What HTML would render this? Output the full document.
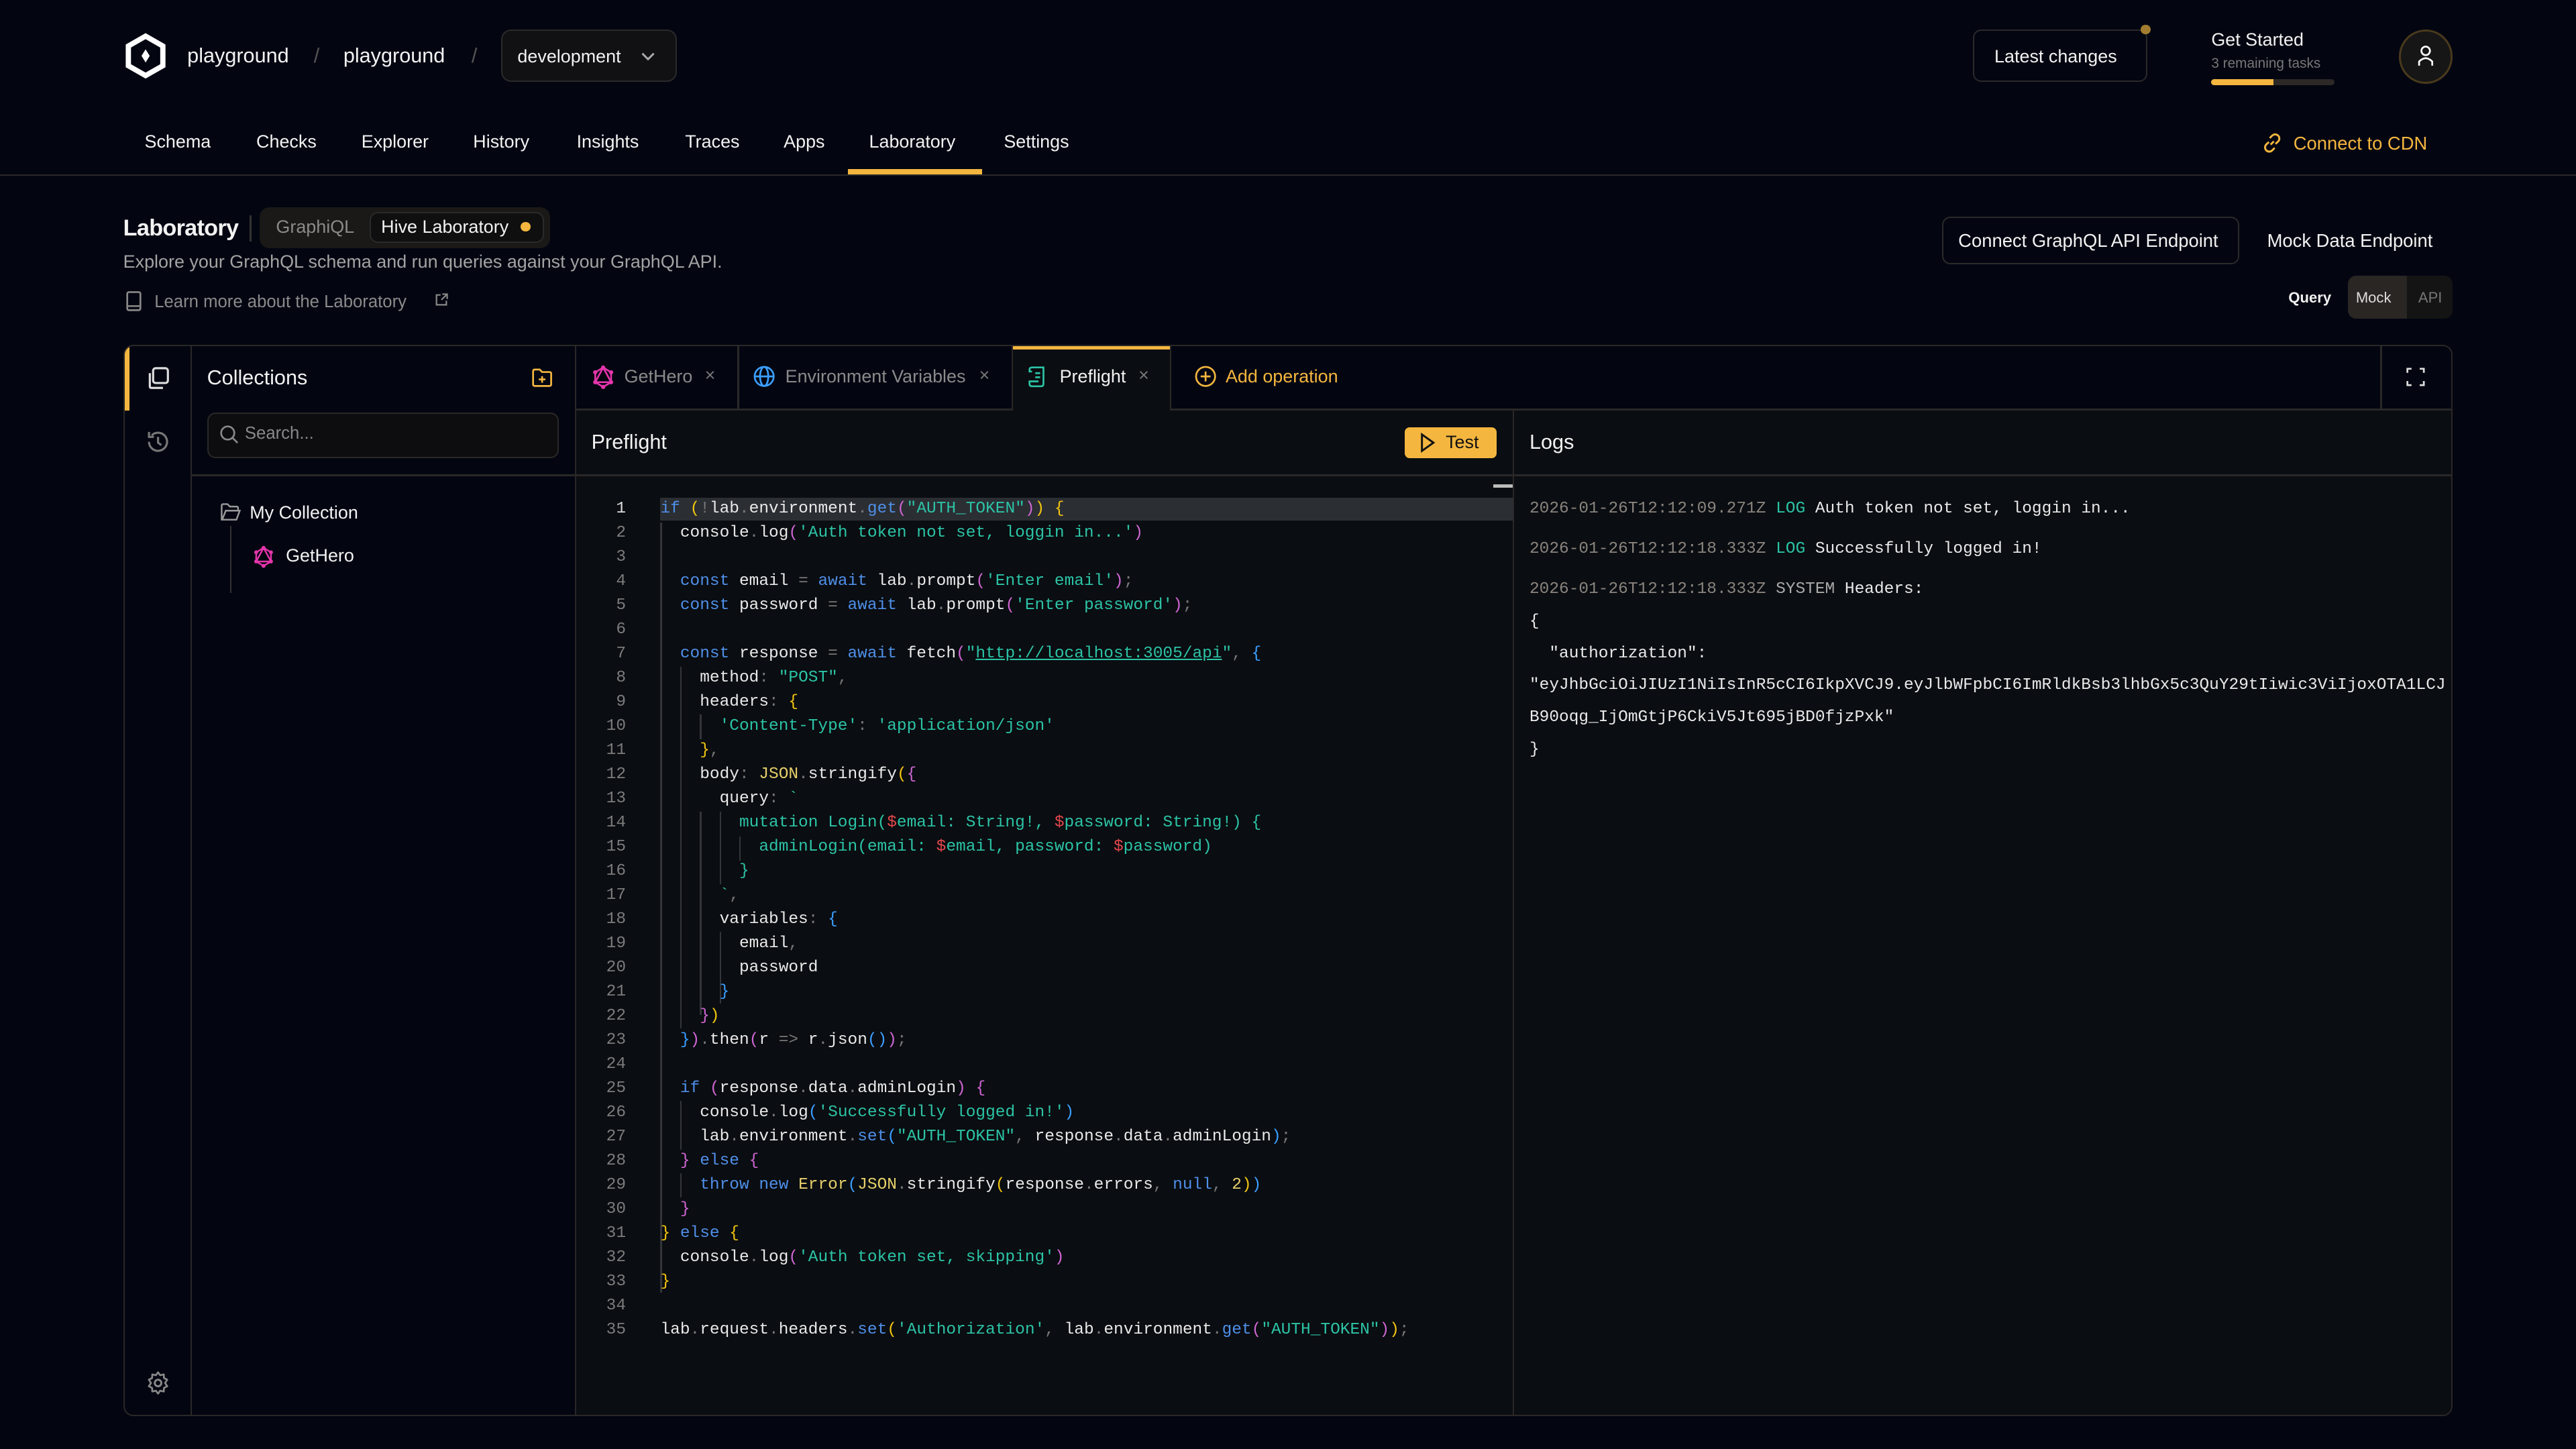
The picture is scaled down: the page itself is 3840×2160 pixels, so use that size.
<!DOCTYPE html>
<html><head><meta charset="utf-8"><style>
*{box-sizing:border-box;margin:0;padding:0}
html,body{width:3840px;height:2160px;overflow:hidden;background:#030611}
#r{zoom:2.44898;width:1568px;height:882px;position:relative;font-family:"Liberation Sans",sans-serif;color:#f2f2f2;background:#030611;overflow:hidden}
.a{position:absolute;white-space:nowrap}
.mono{font-family:"Liberation Mono",monospace}
.k{color:#4f8fe8}.s{color:#2cc3a6}.p{color:#777}.y{color:#f1c40f}.m{color:#cf65d3}.b{color:#3b9eff}.r{color:#e5484d}.t{color:#e6cf6a}.w{color:#e9e9e9}
.code div{height:14.7px;line-height:14.7px;white-space:pre}
.ln{color:#7c7c7c;text-align:right;width:20px}
.g{position:absolute;width:1px;background:#333539}
.lg div{position:absolute;white-space:pre}
</style></head><body><div id="r">

<!-- header -->
<svg class="a" style="left:75px;top:20px" width="27" height="28" viewBox="0 0 27 28"><path d="M13.5 2 L24 8 V20 L13.5 26 L3 20 V8 Z" fill="none" stroke="#fff" stroke-width="3.2"/><path d="M13.5 10 L16 14 L13.5 18 L11 14Z" fill="#fff"/></svg>
<div class="a" style="left:114px;top:27px;font-size:12.5px">playground</div>
<div class="a" style="left:191px;top:27px;font-size:12.5px;color:#555">/</div>
<div class="a" style="left:209px;top:27px;font-size:12.5px">playground</div>
<div class="a" style="left:287px;top:27px;font-size:12.5px;color:#555">/</div>
<div class="a" style="left:305px;top:18px;width:107px;height:32px;border:1px solid #2a2a2a;border-radius:6px;background:#111114"></div>
<div class="a" style="left:315px;top:28px;font-size:11px">development</div>
<svg class="a" style="left:390px;top:31px" width="9" height="7"><path d="M1 1.5 L4.5 5 L8 1.5" stroke="#aaa" fill="none" stroke-width="1.2"/></svg>

<div class="a" style="left:1201px;top:18px;width:106px;height:32px;border:1px solid #2a2a2a;border-radius:5px"></div>
<div class="a" style="left:1214px;top:28px;font-size:11px">Latest changes</div>
<div class="a" style="left:1303px;top:15px;width:6px;height:6px;border-radius:50%;background:#a27c2f"></div>
<div class="a" style="left:1346px;top:18px;font-size:11px">Get Started</div>
<div class="a" style="left:1346px;top:34px;font-size:8.5px;color:#777">3 remaining tasks</div>
<div class="a" style="left:1346px;top:48px;width:75px;height:4px;border-radius:2px;background:#2b2826;overflow:hidden"><div style="width:38px;height:4px;background:#f4b63f"></div></div>
<div class="a" style="left:1460px;top:18px;width:33px;height:33px;border-radius:50%;border:1.5px solid #4a3a1c;background:#161616"></div>
<svg class="a" style="left:1470px;top:27px" width="13" height="14" viewBox="0 0 13 14"><circle cx="6.5" cy="4" r="2.6" fill="none" stroke="#fff" stroke-width="1.1"/><path d="M2.5 13 V10.5 Q6.5 6.5 10.5 10.5 V13" fill="none" stroke="#fff" stroke-width="1.1"/></svg>

<!-- nav -->
<div class="a" style="top:80px;font-size:11px;left:88px">Schema</div>
<div class="a" style="top:80px;font-size:11px;left:156px">Checks</div>
<div class="a" style="top:80px;font-size:11px;left:220px">Explorer</div>
<div class="a" style="top:80px;font-size:11px;left:288px">History</div>
<div class="a" style="top:80px;font-size:11px;left:351px">Insights</div>
<div class="a" style="top:80px;font-size:11px;left:417px">Traces</div>
<div class="a" style="top:80px;font-size:11px;left:477px">Apps</div>
<div class="a" style="top:80px;font-size:11px;left:529px">Laboratory</div>
<div class="a" style="top:80px;font-size:11px;left:611px">Settings</div>
<div class="a" style="left:516px;top:103px;width:82px;height:3px;background:#f4b63f"></div>
<svg class="a" style="left:1376px;top:80px" width="14" height="14" viewBox="0 0 14 14"><path d="M6 8 L8 6 M5.5 4 L7 2.5 a2.5 2.5 0 0 1 3.6 3.6 L9 7.6 M8.5 10 L7 11.5 a2.5 2.5 0 0 1 -3.6 -3.6 L5 6.4" fill="none" stroke="#f4b63f" stroke-width="1.2"/></svg>
<div class="a" style="left:1396px;top:81px;font-size:11.2px;color:#f4b63f">Connect to CDN</div>
<div class="a" style="left:0;top:106px;width:1568px;height:1px;background:#2a2827"></div>

<!-- lab header -->
<div class="a" style="left:75px;top:131px;font-size:14px;font-weight:bold;letter-spacing:-0.3px">Laboratory</div>
<div class="a" style="left:152px;top:131px;width:1px;height:16px;background:#333"></div>
<div class="a" style="left:158px;top:126px;width:177px;height:25px;border-radius:6px;background:#1a1917"></div>
<div class="a" style="left:168px;top:132px;font-size:11px;color:#8a8a8a">GraphiQL</div>
<div class="a" style="left:225px;top:129px;width:106px;height:19px;border-radius:5px;background:#0f0f10;border:1px solid #2a2a2a"></div>
<div class="a" style="left:232px;top:132px;font-size:11px">Hive Laboratory</div>
<div class="a" style="left:317px;top:135px;width:6px;height:6px;border-radius:50%;background:#f4b63f"></div>
<div class="a" style="left:75px;top:153px;font-size:11px;color:#a3a3a3">Explore your GraphQL schema and run queries against your GraphQL API.</div>
<svg class="a" style="left:76px;top:177px" width="11" height="13" viewBox="0 0 11 13"><rect x="1.5" y="1" width="8" height="11" rx="1" fill="none" stroke="#888" stroke-width="1.1"/><path d="M1.5 9.5 H9.5" stroke="#888"/></svg>
<div class="a" style="left:94px;top:178px;font-size:10.5px;color:#8a8a8a">Learn more about the Laboratory</div>
<svg class="a" style="left:264px;top:178px" width="9" height="9" viewBox="0 0 9 9"><path d="M4 1.5 H1.5 V7.5 H7.5 V5 M5 1 H8 V4 M8 1 L4.5 4.5" fill="none" stroke="#888" stroke-width="0.9"/></svg>

<div class="a" style="left:1182px;top:132px;width:181px;height:29px;border:1px solid #2a2a2a;border-radius:5px"></div>
<div class="a" style="left:1192px;top:140px;font-size:11.2px">Connect GraphQL API Endpoint</div>
<div class="a" style="left:1380px;top:140px;font-size:11.2px">Mock Data Endpoint</div>
<div class="a" style="left:1393px;top:176px;font-size:9px;font-weight:bold">Query</div>
<div class="a" style="left:1429px;top:168px;width:64px;height:26px;border-radius:5px;background:#141414;overflow:hidden"><div style="width:36px;height:26px;background:#292624"></div></div>
<div class="a" style="left:1434px;top:176px;font-size:9px;color:#ddd">Mock</div>
<div class="a" style="left:1472px;top:176px;font-size:9px;color:#777">API</div>

<!-- main panel -->
<div class="a" style="left:75px;top:210px;width:1418px;height:652px;border:1px solid #2a2827;border-radius:6px;overflow:hidden">
  <div class="a" style="left:0;top:0;width:3px;height:39px;background:#f4b63f"></div>
  <div class="a" style="left:40px;top:0;width:1px;height:652px;background:#2a2827"></div>
  <div class="a" style="left:274px;top:0;width:1px;height:652px;background:#2a2827"></div>
  <div class="a" style="left:41px;top:78px;width:233px;height:1px;background:#2a2827"></div>
  <div class="a" style="left:275px;top:0;width:1142px;height:39px;background:#030611"></div>
  <div class="a" style="left:275px;top:38px;width:1142px;height:1px;background:#2a2827"></div>
  <div class="a" style="left:275px;top:39px;width:571px;height:613px;background:#0a0d11"></div>
  <div class="a" style="left:846px;top:39px;width:572px;height:613px;background:#0a0d11"></div>
  <div class="a" style="left:845px;top:39px;width:1px;height:613px;background:#2a2827"></div>
  <div class="a" style="left:275px;top:78px;width:1142px;height:1px;background:#2a2827"></div>
  <div class="a" style="left:373px;top:0;width:1px;height:38px;background:#2a2827"></div>
  <div class="a" style="left:540px;top:0;width:97px;height:39px;background:#0a0d11;border-left:1px solid #2a2827;border-right:1px solid #2a2827"><div style="height:2px;background:#f4b63f"></div></div>
  <div class="a" style="left:1373px;top:0;width:1px;height:38px;background:#2a2827"></div>
</div>

<!-- activity icons -->
<svg class="a" style="left:88px;top:222px" width="16" height="16" viewBox="0 0 16 16"><rect x="5" y="2" width="9" height="9" rx="1.5" fill="none" stroke="#ddd" stroke-width="1.3"/><path d="M3 5 V13 Q3 14 4 14 H11" fill="none" stroke="#ddd" stroke-width="1.3"/></svg>
<svg class="a" style="left:88px;top:261px" width="16" height="16" viewBox="0 0 16 16"><path d="M2.5 8 A5.5 5.5 0 1 0 4.2 4 M2.5 2 V5 H5.5" fill="none" stroke="#777" stroke-width="1.3"/><path d="M8 5 V8.5 L10 10" fill="none" stroke="#777" stroke-width="1.3"/></svg>
<svg class="a" style="left:88px;top:834px" width="16" height="16" viewBox="0 0 16 16"><circle cx="8" cy="8" r="2" fill="none" stroke="#888" stroke-width="1.2"/><path d="M8 1.5 L9.3 3.3 L11.5 2.8 L11.6 5 L13.6 6 L12.3 8 L13.6 10 L11.6 11 L11.5 13.2 L9.3 12.7 L8 14.5 L6.7 12.7 L4.5 13.2 L4.4 11 L2.4 10 L3.7 8 L2.4 6 L4.4 5 L4.5 2.8 L6.7 3.3Z" fill="none" stroke="#888" stroke-width="1.1" stroke-linejoin="round"/></svg>

<!-- collections -->
<div class="a" style="left:126px;top:223px;font-size:12.5px">Collections</div>
<svg class="a" style="left:323px;top:223px" width="14" height="14" viewBox="0 0 14 14"><path d="M1.5 3 Q1.5 2 2.5 2 H5.5 L7 3.5 H11.5 Q12.5 3.5 12.5 4.5 V11 Q12.5 12 11.5 12 H2.5 Q1.5 12 1.5 11Z" fill="none" stroke="#f4b63f" stroke-width="1.1"/><path d="M7 6 V10 M5 8 H9" stroke="#f4b63f" stroke-width="1.1"/></svg>
<div class="a" style="left:126px;top:251px;width:214px;height:28px;border:1px solid #2a2827;border-radius:5px;background:#0d0d10"></div>
<svg class="a" style="left:133px;top:258px" width="13" height="13" viewBox="0 0 13 13"><circle cx="5.5" cy="5.5" r="4" fill="none" stroke="#888" stroke-width="1.1"/><path d="M8.5 8.5 L11.5 11.5" stroke="#888" stroke-width="1.1"/></svg>
<div class="a" style="left:149px;top:258px;font-size:10.5px;color:#888">Search...</div>
<svg class="a" style="left:134px;top:306px" width="13" height="12" viewBox="0 0 13 12"><path d="M1 2 Q1 1 2 1 H4.5 L6 2.5 H10 Q11 2.5 11 3.5 V4.5 M1 2 V10.5 H10 L12 5 H3.5 L1.5 10" fill="none" stroke="#999" stroke-width="1"/></svg>
<div class="a" style="left:152px;top:306px;font-size:11px">My Collection</div>
<div class="a" style="left:140px;top:320px;width:1px;height:41px;background:#333"></div>
<svg class="a" style="left:154px;top:332px" width="13" height="14" viewBox="0 0 13 14"><path d="M6.5 1.5 L11 4.2 V9.8 L6.5 12.5 L2 9.8 V4.2Z M6.5 1.5 L11 9.8 H2Z" fill="none" stroke="#e535ab" stroke-width="1"/><g fill="#e535ab"><circle cx="6.5" cy="1.5" r="1.2"/><circle cx="11" cy="4.2" r="1.2"/><circle cx="11" cy="9.8" r="1.2"/><circle cx="6.5" cy="12.5" r="1.2"/><circle cx="2" cy="9.8" r="1.2"/><circle cx="2" cy="4.2" r="1.2"/></g></svg>
<div class="a" style="left:174px;top:332px;font-size:11px">GetHero</div>

<!-- tabs content -->
<svg class="a" style="left:360px;top:222px" width="14" height="15" viewBox="0 0 13 14"><path d="M6.5 1.5 L11 4.2 V9.8 L6.5 12.5 L2 9.8 V4.2Z M6.5 1.5 L11 9.8 H2Z" fill="none" stroke="#e535ab" stroke-width="1"/><g fill="#e535ab"><circle cx="6.5" cy="1.5" r="1.2"/><circle cx="11" cy="4.2" r="1.2"/><circle cx="11" cy="9.8" r="1.2"/><circle cx="6.5" cy="12.5" r="1.2"/><circle cx="2" cy="9.8" r="1.2"/><circle cx="2" cy="4.2" r="1.2"/></g></svg>
<div class="a" style="left:380px;top:223px;font-size:11px;color:#8a8a8a">GetHero</div>
<div class="a" style="left:429px;top:222px;font-size:11px;color:#777">×</div>
<svg class="a" style="left:458px;top:222px" width="14" height="14" viewBox="0 0 14 14"><circle cx="7" cy="7" r="5.8" fill="none" stroke="#3b9eff" stroke-width="1.1"/><ellipse cx="7" cy="7" rx="2.5" ry="5.8" fill="none" stroke="#3b9eff" stroke-width="1.1"/><path d="M1.2 7 H12.8" stroke="#3b9eff" stroke-width="1.1"/></svg>
<div class="a" style="left:478px;top:223px;font-size:11px;color:#8a8a8a">Environment Variables</div>
<div class="a" style="left:596px;top:222px;font-size:11px;color:#777">×</div>
<svg class="a" style="left:625px;top:222px" width="13" height="14" viewBox="0 0 13 14"><path d="M3 1.5 H10 V11.5 Q10 13 8.5 13 H3 Q1.5 13 1.5 11.5 V10 H7 M3 1.5 Q1.5 1.5 1.5 3 V4 H3 M5 5 H8 M5 7.5 H8" fill="none" stroke="#2cc3a6" stroke-width="1.1"/></svg>
<div class="a" style="left:645px;top:223px;font-size:11px">Preflight</div>
<div class="a" style="left:693px;top:222px;font-size:11px;color:#777">×</div>
<svg class="a" style="left:727px;top:222px" width="14" height="14" viewBox="0 0 14 14"><circle cx="7" cy="7" r="5.8" fill="none" stroke="#f4b63f" stroke-width="1.1"/><path d="M7 4 V10 M4 7 H10" stroke="#f4b63f" stroke-width="1.1"/></svg>
<div class="a" style="left:746px;top:223px;font-size:11px;color:#f4b63f">Add operation</div>
<svg class="a" style="left:1464px;top:223px" width="13" height="13" viewBox="0 0 13 13"><path d="M1.5 4 V1.5 H4 M9 1.5 H11.5 V4 M11.5 9 V11.5 H9 M4 11.5 H1.5 V9" fill="none" stroke="#ddd" stroke-width="1.1"/></svg>

<!-- editor header -->
<div class="a" style="left:360px;top:262px;font-size:12.5px">Preflight</div>
<div class="a" style="left:855px;top:260px;width:56px;height:19px;border-radius:3px;background:#f4b63f"></div>
<svg class="a" style="left:864px;top:263px" width="10" height="13" viewBox="0 0 10 13"><path d="M1.5 1.5 L8.5 6.5 L1.5 11.5Z" fill="none" stroke="#111" stroke-width="1.2"/></svg>
<div class="a" style="left:880px;top:263px;font-size:11px;color:#111">Test</div>
<div class="a" style="top:262px;font-size:12.5px;left:931px">Logs</div>

<!-- code -->
<div class="a" style="left:402px;top:303px;width:519px;height:14px;background:#2b2e33"></div>
<div class="a" style="left:909px;top:295px;width:12px;height:2px;background:#bbb"></div>
<div class="g" style="left:402px;top:318px;height:441px"></div>
<div class="g" style="left:414px;top:406px;height:220px"></div>
<div class="g" style="left:426px;top:435px;height:15px"></div>
<div class="g" style="left:426px;top:494px;height:124px"></div>
<div class="g" style="left:438px;top:494px;height:44px"></div>
<div class="g" style="left:450px;top:509px;height:15px"></div>
<div class="g" style="left:438px;top:567px;height:44px"></div>
<div class="g" style="left:414px;top:670px;height:30px"></div>
<div class="g" style="left:414px;top:714px;height:15px"></div>
<div class="g" style="left:402px;top:758px;height:29px"></div>

<div class="a mono code ln" style="left:361px;top:302.5px;font-size:10px"><div style="color:#ddd">1</div><div>2</div><div>3</div><div>4</div><div>5</div><div>6</div><div>7</div><div>8</div><div>9</div><div>10</div><div>11</div><div>12</div><div>13</div><div>14</div><div>15</div><div>16</div><div>17</div><div>18</div><div>19</div><div>20</div><div>21</div><div>22</div><div>23</div><div>24</div><div>25</div><div>26</div><div>27</div><div>28</div><div>29</div><div>30</div><div>31</div><div>32</div><div>33</div><div>34</div><div>35</div></div>
<div class="a mono code w" style="left:402px;top:302.5px;font-size:10px"><div><span class="k">if</span> <span class="y">(</span><span class="p">!</span>lab<span class="p">.</span>environment<span class="p">.</span><span class="k">get</span><span class="m">(</span><span class="s">"AUTH_TOKEN"</span><span class="m">)</span><span class="y">)</span> <span class="y">{</span></div><div>  console<span class="p">.</span>log<span class="m">(</span><span class="s">'Auth token not set, loggin in...'</span><span class="m">)</span></div><div> </div><div>  <span class="k">const</span> email <span class="p">=</span> <span class="k">await</span> lab<span class="p">.</span>prompt<span class="m">(</span><span class="s">'Enter email'</span><span class="m">)</span><span class="p">;</span></div><div>  <span class="k">const</span> password <span class="p">=</span> <span class="k">await</span> lab<span class="p">.</span>prompt<span class="m">(</span><span class="s">'Enter password'</span><span class="m">)</span><span class="p">;</span></div><div> </div><div>  <span class="k">const</span> response <span class="p">=</span> <span class="k">await</span> fetch<span class="m">(</span><span class="s">"<u>http://localhost:3005/api</u>"</span><span class="p">,</span> <span class="b">{</span></div><div>    method<span class="p">:</span> <span class="s">"POST"</span><span class="p">,</span></div><div>    headers<span class="p">:</span> <span class="y">{</span></div><div>      <span class="s">'Content-Type'</span><span class="p">:</span> <span class="s">'application/json'</span></div><div>    <span class="y">}</span><span class="p">,</span></div><div>    body<span class="p">:</span> <span class="t">JSON</span><span class="p">.</span>stringify<span class="y">(</span><span class="m">{</span></div><div>      query<span class="p">:</span> <span class="s">`</span></div><div><span class="s">        mutation Login(</span><span class="r">$</span><span class="s">email: String!, </span><span class="r">$</span><span class="s">password: String!) {</span></div><div><span class="s">          adminLogin(email: </span><span class="r">$</span><span class="s">email, password: </span><span class="r">$</span><span class="s">password)</span></div><div><span class="s">        }</span></div><div><span class="s">      `</span><span class="p">,</span></div><div>      variables<span class="p">:</span> <span class="b">{</span></div><div>        email<span class="p">,</span></div><div>        password</div><div>      <span class="b">}</span></div><div>    <span class="m">}</span><span class="y">)</span></div><div>  <span class="b">}</span><span class="m">)</span><span class="p">.</span>then<span class="m">(</span>r <span class="p">=&gt;</span> r<span class="p">.</span>json<span class="b">()</span><span class="m">)</span><span class="p">;</span></div><div> </div><div>  <span class="k">if</span> <span class="m">(</span>response<span class="p">.</span>data<span class="p">.</span>adminLogin<span class="m">)</span> <span class="m">{</span></div><div>    console<span class="p">.</span>log<span class="b">(</span><span class="s">'Successfully logged in!'</span><span class="b">)</span></div><div>    lab<span class="p">.</span>environment<span class="p">.</span><span class="k">set</span><span class="b">(</span><span class="s">"AUTH_TOKEN"</span><span class="p">,</span> response<span class="p">.</span>data<span class="p">.</span>adminLogin<span class="b">)</span><span class="p">;</span></div><div>  <span class="m">}</span> <span class="k">else</span> <span class="m">{</span></div><div>    <span class="k">throw</span> <span class="k">new</span> <span class="t">Error</span><span class="b">(</span><span class="t">JSON</span><span class="p">.</span>stringify<span class="y">(</span>response<span class="p">.</span>errors<span class="p">,</span> <span class="k">null</span><span class="p">,</span> <span class="t">2</span><span class="y">)</span><span class="b">)</span></div><div>  <span class="m">}</span></div><div><span class="y">}</span> <span class="k">else</span> <span class="y">{</span></div><div>  console<span class="p">.</span>log<span class="m">(</span><span class="s">'Auth token set, skipping'</span><span class="m">)</span></div><div><span class="y">}</span></div><div> </div><div>lab<span class="p">.</span>request<span class="p">.</span>headers<span class="p">.</span><span class="k">set</span><span class="y">(</span><span class="s">'Authorization'</span><span class="p">,</span> lab<span class="p">.</span>environment<span class="p">.</span><span class="k">get</span><span class="m">(</span><span class="s">"AUTH_TOKEN"</span><span class="m">)</span><span class="y">)</span><span class="p">;</span></div></div>

<!-- logs -->
<div class="a mono w lg" style="left:931px;top:303px;font-size:10px;line-height:14px;width:561px;height:170px;overflow:hidden">
<div style="top:0"><span style="color:#8a847e">2026-01-26T12:12:09.271Z</span> <span class="s">LOG</span> Auth token not set, loggin in...</div>
<div style="top:24.5px"><span style="color:#8a847e">2026-01-26T12:12:18.333Z</span> <span class="s">LOG</span> Successfully logged in!</div>
<div style="top:49px"><span style="color:#8a847e">2026-01-26T12:12:18.333Z</span> <span style="color:#aaa">SYSTEM</span> Headers:</div>
<div style="top:68.5px">{</div>
<div style="top:88px">  "authorization":</div>
<div style="top:107.5px">"eyJhbGciOiJIUzI1NiIsInR5cCI6IkpXVCJ9.eyJlbWFpbCI6ImRldkBsb3lhbGx5c3QuY29tIiwic3ViIjoxOTA1LCJ</div>
<div style="top:127px">B90oqg_IjOmGtjP6CkiV5Jt695jBD0fjzPxk"</div>
<div style="top:146.5px">}</div>
</div>

</div></body></html>
